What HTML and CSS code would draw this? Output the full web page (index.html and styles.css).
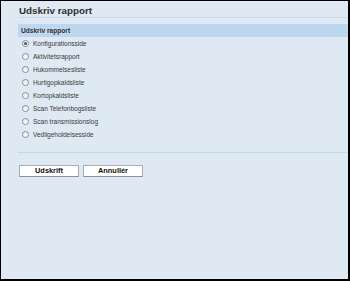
FILE: index.html
```html
<!doctype html>
<html lang="da">
<head>
<meta charset="utf-8">
<title>Udskriv rapport</title>
<link rel="stylesheet" href="styles.css">
</head>
<body>
  <div class="page">
    <h1 class="title">Udskriv rapport</h1>
    <div class="section">
      <div class="section_head">Udskriv rapport</div>
      <ul class="options">
        <li><span class="radio checked"></span>Konfigurationsside</li>
        <li><span class="radio"></span>Aktivitetsrapport</li>
        <li><span class="radio"></span>Hukommelsesliste</li>
        <li><span class="radio"></span>Hurtigopkaldsliste</li>
        <li><span class="radio"></span>Kortopkaldsliste</li>
        <li><span class="radio"></span>Scan Telefonbogsliste</li>
        <li><span class="radio"></span>Scan transmissionslog</li>
        <li><span class="radio"></span>Vedligeholdelsesside</li>
      </ul>
    </div>
    <div class="buttons">
      <button class="btn">Udskrift</button>
      <button class="btn">Annullér</button>
    </div>
  </div>
</body>
</html>
```

FILE: styles.css
```css
* {
  margin: 0;
  padding: 0;
  list-style: none;
  box-sizing: border-box;
}
body {
  font-family: "Liberation Sans", Arial, sans-serif;
  background-color: #000;
}
.page {
  width: 350px;
  height: 281px;
  border-style: solid;
  border-color: #000;
  border-width: 1px 2px 2px 1px;
  background-color: #dfe9f3;
  padding-left: 17px;
}
.title {
  font-size: 9.8px;
  font-weight: bold;
  color: #2e2e2e;
  line-height: 12px;
  padding: 4px 0 0 1px;
  height: 17px;
  border-bottom: 1px solid #cbd9e8;
}
.section {
  margin-top: 6px;
}
.section_head {
  height: 13px;
  line-height: 13px;
  background-color: #bdd7ee;
  font-size: 6.6px;
  font-weight: bold;
  color: #333;
  padding-left: 3px;
}
.options li {
  height: 13px;
  display: flex;
  align-items: center;
  padding-left: 4px;
  font-size: 6.5px;
  color: #3a3a3a;
}
.radio {
  width: 7px;
  height: 7px;
  border: 1px solid #8a8f96;
  border-radius: 50%;
  background: linear-gradient(#e6e9ec, #ffffff);
  margin-right: 4px;
  display: flex;
  align-items: center;
  justify-content: center;
}
.radio.checked::after {
  content: "";
  width: 3px;
  height: 3px;
  border-radius: 50%;
  background-color: #4a5a48;
}
.buttons {
  margin-top: 11px;
  border-top: 1px solid #c9d8e8;
  padding: 12px 0 0 1px;
  display: flex;
  gap: 4px;
}
.btn {
  width: 60px;
  height: 12px;
  background-color: #fff;
  border: 1px solid #a9adb2;
  border-bottom-color: #8e9297;
  font-family: "Liberation Sans", Arial, sans-serif;
  font-size: 7.4px;
  font-weight: bold;
  color: #111;
  line-height: 10px;
}
```
